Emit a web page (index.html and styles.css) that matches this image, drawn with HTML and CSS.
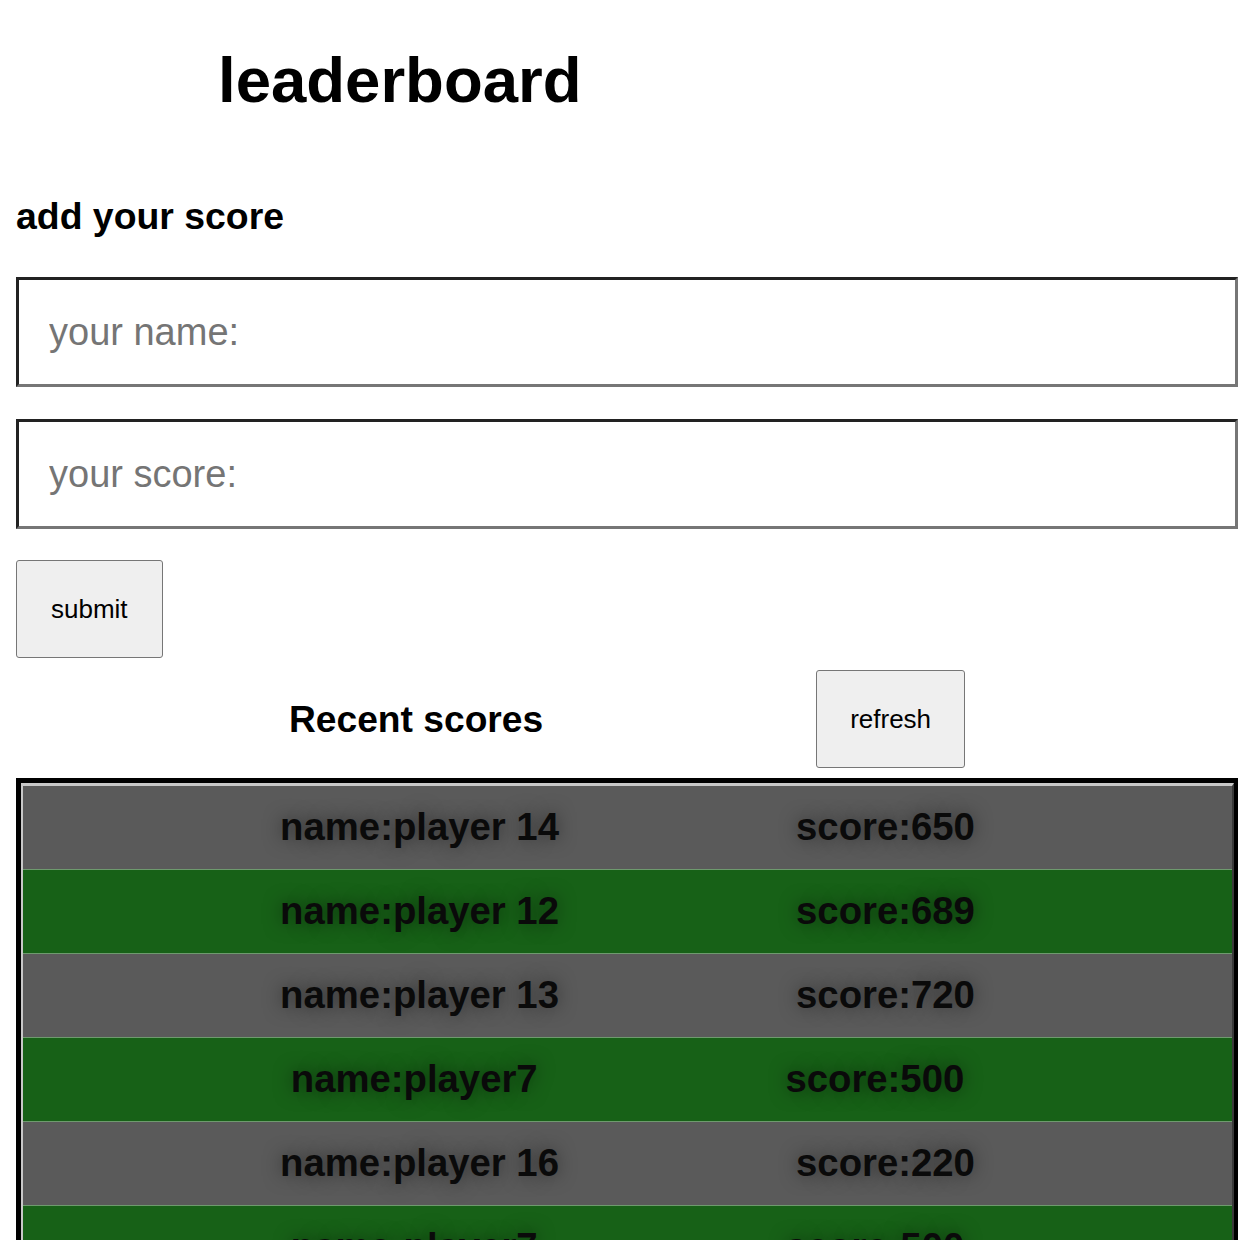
FILE: index.html
```html
<!DOCTYPE html>
<html lang="en">
<head>
<meta charset="utf-8">
<title>leaderboard</title>
<link rel="stylesheet" href="styles.css">
</head>
<body>
<main class="page">
  <header class="top">
    <h1 class="title">leaderboard</h1>
  </header>
  <section class="add">
    <h2 class="add-title">add your score</h2>
    <form class="form">
      <input class="field" type="text" placeholder="your name:">
      <input class="field" type="text" placeholder="your score:">
      <button class="btn btn-submit" type="button">submit</button>
    </form>
  </section>
  <section class="recent">
    <div class="recent-head">
      <h2 class="recent-title">Recent scores</h2>
      <button class="btn" type="button">refresh</button>
    </div>
    <div class="board">
      <div class="board-inner">
        <div class="row gray"><span class="cell">name:player 14</span><span class="cell">score:650</span></div>
        <div class="row green"><span class="cell">name:player 12</span><span class="cell">score:689</span></div>
        <div class="row gray"><span class="cell">name:player 13</span><span class="cell">score:720</span></div>
        <div class="row green"><span class="cell">name:player7</span><span class="cell">score:500</span></div>
        <div class="row gray"><span class="cell">name:player 16</span><span class="cell">score:220</span></div>
        <div class="row green"><span class="cell">name:player7</span><span class="cell">score:500</span></div>
      </div>
    </div>
  </section>
</main>
</body>
</html>
```
FILE: styles.css
```css
html, body {
  margin: 0;
  padding: 0;
  background: #fff;
}

body {
  font-family: "Liberation Sans", Arial, sans-serif;
  color: #000;
}

.page {
  padding: 0 16px;
  display: flex;
  flex-direction: column;
}

.top {
  display: flex;
}

.title {
  margin: 44px 0 0 202px;
  font-size: 63.5px;
  font-weight: bold;
  line-height: 73px;
}

.add-title {
  margin: 78px 0 0;
  font-size: 37.4px;
  font-weight: bold;
  line-height: 42px;
}

.form {
  margin-top: 40px;
  display: flex;
  flex-direction: column;
  align-items: flex-start;
}

.field {
  box-sizing: border-box;
  width: 100%;
  height: 110px;
  margin: 0 0 32px;
  padding: 0 30px;
  border: 3px solid;
  border-color: #222 #767676 #767676 #222;
  font-family: "Liberation Sans", Arial, sans-serif;
  font-size: 38px;
  color: #000;
  background: #fff;
  outline: none;
}

.field + .field {
  margin-bottom: 31px;
}

.field::placeholder {
  color: #757575;
}

.btn {
  font-family: "Liberation Sans", Arial, sans-serif;
  font-size: 26px;
  line-height: 30px;
  padding: 33px 33px;
  background: #efefef;
  border: 1px solid #767676;
  border-radius: 3px;
  color: #000;
}

.btn-submit {
  padding: 33px 34px;
}

.recent {
  margin-top: 12px;
  display: flex;
  flex-direction: column;
}

.recent-head {
  display: flex;
  justify-content: space-evenly;
  align-items: center;
}

.recent-title {
  margin: 0 0 1px;
  font-size: 37.2px;
  font-weight: bold;
  line-height: 42px;
}

.board {
  margin-top: 10px;
  border: 4px solid #000;
  border-left-width: 5px;
  border-top-width: 5px;
}

.board-inner {
  border: 2px solid;
  border-top-width: 3px;
  border-color: #c8c8c8 #3a3a3a #3a3a3a #c8c8c8;
}

.row {
  box-sizing: border-box;
  height: 83px;
  display: flex;
  justify-content: space-evenly;
  align-items: center;
  padding: 0 20px 2px;
}

.row + .row {
  height: 84px;
  border-top: 1px solid #6e9a6e;
}

.gray {
  background: #5a5a5a;
}

.green {
  background: #176117;
}

.cell {
  font-size: 38.3px;
  font-weight: bold;
  color: #0a0a0a;
  text-shadow: 0 0 18px rgba(0, 0, 0, 0.5);
}
```
